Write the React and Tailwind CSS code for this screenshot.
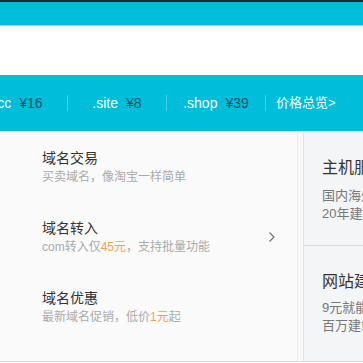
import React from 'react';

const prices = [
    { name: '.cc', price: '¥16' },
    { name: '.site', price: '¥8' },
    { name: '.shop', price: '¥39' },
];

const services = [
    { title: '域名交易', desc: <>买卖域名，像淘宝一样简单</> },
    { title: '域名转入', desc: <>com转入仅<span className="text-[#f5a14a]">45元</span>，支持批量功能</>, arrow: true },
    { title: '域名优惠', desc: <>最新域名促销，低价<span className="text-[#f5a14a]">1元</span>起</> },
];

const App = () => {
    return (
        <div className="w-full h-[363px] overflow-hidden bg-white text-[#333]" style={{ fontFamily: '"Liberation Sans", "Noto Sans CJK SC", sans-serif' }}>
            {/* top header strip */}
            <div className="h-[2px] bg-[#1c2c2f]"></div>
            <div className="h-[23px] bg-[#00bdd9]"></div>
            <div className="h-[1px] bg-[#8adbea]"></div>
            <div className="h-[49px] bg-white"></div>

            {/* price bar */}
            <div className="h-[56px] bg-[#00bdd9] flex items-center">
                <div className="flex items-center ml-[-31px] shrink-0">
                    {prices.map((p) => (
                        <React.Fragment key={p.name}>
                            <div className="w-[98px] shrink-0 text-center text-[14px] whitespace-nowrap">
                                <span className="text-white">{p.name}</span>
                                <span className="ml-2 text-[#17506a]">{p.price}</span>
                            </div>
                            <div className="w-px h-4 bg-[#4ccde4]"></div>
                        </React.Fragment>
                    ))}
                    <div className="pl-[10px] text-[13px] text-white whitespace-nowrap">价格总览&gt;</div>
                </div>
            </div>

            {/* content */}
            <div className="flex h-[231px] border-b border-[#dcdcdc]">
                <div className="w-[298px] shrink-0 bg-[#fafafa] border-r border-[#ededed] pt-[17px] pl-[42px]">
                    {services.map((s) => (
                        <div key={s.title} className="relative h-[70px]">
                            <div className="text-[14px] leading-[20px] text-[#333]">{s.title}</div>
                            <div className="text-[12px] leading-[18px] text-[#aaa] whitespace-nowrap">{s.desc}</div>
                            {s.arrow && (
                                <svg className="absolute left-[226px] top-[13px]" width="8" height="12" viewBox="0 0 8 12" fill="none">
                                    <path d="M1.5 1.5 L6 6 L1.5 10.5" stroke="#666" strokeWidth="1.1" />
                                </svg>
                            )}
                        </div>
                    ))}
                </div>
                <div className="w-[5px] shrink-0 bg-[#f8f8f8]"></div>
                <div className="flex-1 bg-[#f4f5f6] border-l border-[#e2e2e2] flex flex-col">
                    <div className="h-[115px] border-b border-[#dedede] pt-[26px] pl-[18px] whitespace-nowrap">
                        <div className="text-[16px] leading-[22px] text-[#333]">主机服务</div>
                        <div className="mt-[8px] text-[13px] leading-[18px] text-[#777]">国内海外云主机</div>
                        <div className="text-[13px] leading-[18px] text-[#777]">20年建站经验</div>
                    </div>
                    <div className="flex-1 pt-[25px] pl-[18px] whitespace-nowrap">
                        <div className="text-[16px] leading-[22px] text-[#333]">网站建设</div>
                        <div className="mt-[6px] text-[13px] leading-[18px] text-[#777]">9元就能建网站</div>
                        <div className="text-[13px] leading-[18px] text-[#777]">百万建站用户</div>
                    </div>
                </div>
            </div>
        </div>
    );
};

export default App;
